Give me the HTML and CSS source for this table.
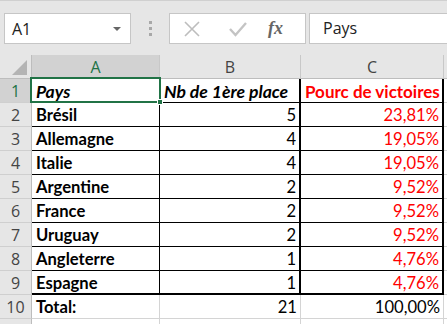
FILE: index.html
```html
<!DOCTYPE html>
<html lang="fr">
<head>
<meta charset="utf-8">
<link rel="stylesheet" href="styles.css">
</head>
<body>
<div class="app">
  <div class="toolbar">
    <div class="namebox">
      <span class="nb-text">A1</span>
      <span class="nb-arrow"></span>
    </div>
    <div class="grip"><i></i><i></i><i></i></div>
    <div class="fxbox">
      <svg class="ico" width="20" height="20" viewBox="0 0 20 20"><path d="M3 3 L17 17 M17 3 L3 17" stroke="#bdbdbd" stroke-width="1.6" fill="none"/></svg>
      <svg class="ico" width="20" height="20" viewBox="0 0 20 20"><path d="M2 10 L7.5 16 L18 4" stroke="#c4c4c4" stroke-width="2.4" fill="none"/></svg>
      <span class="fx">fx</span>
    </div>
    <div class="formula">Pays</div>
  </div>
  <div class="sheet">
    <div class="grid">
      <div class="corner"><span class="tri"></span></div>
      <div class="ch sel">A</div>
      <div class="ch">B</div>
      <div class="ch">C</div>
      <div class="ch last"></div>

      <div class="rh sel">1</div>
      <div class="c a t bi">Pays</div>
      <div class="c b t bi">Nb de 1ère place</div>
      <div class="c cc t b-red">Pourc de victoires</div>
      <div class="c d"></div>

      <div class="rh">2</div>
      <div class="c a t bold">Brésil</div>
      <div class="c b t num">5</div>
      <div class="c cc t num red">23,81%</div>
      <div class="c d"></div>

      <div class="rh">3</div>
      <div class="c a t bold">Allemagne</div>
      <div class="c b t num">4</div>
      <div class="c cc t num red">19,05%</div>
      <div class="c d"></div>

      <div class="rh">4</div>
      <div class="c a t bold">Italie</div>
      <div class="c b t num">4</div>
      <div class="c cc t num red">19,05%</div>
      <div class="c d"></div>

      <div class="rh">5</div>
      <div class="c a t bold">Argentine</div>
      <div class="c b t num">2</div>
      <div class="c cc t num red">9,52%</div>
      <div class="c d"></div>

      <div class="rh">6</div>
      <div class="c a t bold">France</div>
      <div class="c b t num">2</div>
      <div class="c cc t num red">9,52%</div>
      <div class="c d"></div>

      <div class="rh">7</div>
      <div class="c a t bold">Uruguay</div>
      <div class="c b t num">2</div>
      <div class="c cc t num red">9,52%</div>
      <div class="c d"></div>

      <div class="rh">8</div>
      <div class="c a t bold">Angleterre</div>
      <div class="c b t num">1</div>
      <div class="c cc t num red">4,76%</div>
      <div class="c d"></div>

      <div class="rh">9</div>
      <div class="c a t bold thickb">Espagne</div>
      <div class="c b t num thickb">1</div>
      <div class="c cc t num red thickb">4,76%</div>
      <div class="c d"></div>

      <div class="rh">10</div>
      <div class="c bold">Total:</div>
      <div class="c num">21</div>
      <div class="c num">100,00%</div>
      <div class="c d"></div>

      <div class="rh"></div>
      <div class="c"></div>
      <div class="c"></div>
      <div class="c"></div>
      <div class="c d"></div>
    </div>
    <div class="selection"><span class="handle"></span></div>
  </div>
</div>
</body>
</html>
```
FILE: styles.css
```css
* { box-sizing: border-box; }
html, body { margin: 0; padding: 0; }
body {
  width: 447px;
  height: 324px;
  overflow: hidden;
  background: #fff;
  font-family: "Lato", "Open Sans", sans-serif;
}
.app { width: 447px; height: 324px; overflow: hidden; }

.toolbar {
  height: 55px;
  background: #e6e6e6;
  border-top: 1px solid #d0d0d0;
  display: flex;
  align-items: flex-start;
  padding-top: 12px;
  padding-left: 4px;
}
.namebox {
  width: 127px;
  height: 31px;
  background: #fff;
  border: 1px solid #c6c6c6;
  display: flex;
  align-items: center;
  justify-content: space-between;
  padding: 0 9px 0 7px;
}
.nb-text {
  font-family: "Open Sans", sans-serif;
  font-size: 16px;
  color: #222;
}
.nb-arrow {
  width: 0; height: 0;
  border-left: 4px solid transparent;
  border-right: 4px solid transparent;
  border-top: 4px solid #666;
}
.grip {
  width: 38px;
  height: 31px;
  display: flex;
  flex-direction: column;
  align-items: center;
  justify-content: center;
  gap: 3px;
}
.grip i {
  display: block;
  width: 3px; height: 3px;
  background: #a8a8a8;
}
.fxbox {
  width: 137px;
  height: 31px;
  background: #fff;
  border: 1px solid #c6c6c6;
  display: flex;
  align-items: center;
  padding-left: 12px;
  gap: 26px;
}
.ico { display: block; flex: none; }
.fx {
  font-family: "Liberation Serif", "DejaVu Serif", serif;
  font-style: italic;
  font-weight: 700;
  font-size: 18px;
  color: #666;
  margin-left: -6px;
}
.formula {
  margin-left: 3px;
  flex: 1;
  height: 31px;
  background: #fff;
  border: 1px solid #c6c6c6;
  border-right: none;
  font-family: "Open Sans", sans-serif;
  font-size: 16px;
  color: #222;
  line-height: 29px;
  padding-left: 13px;
}

.sheet { position: relative; }
.grid {
  display: grid;
  grid-template-columns: 32px 128px 141px 143px 1fr;
  grid-template-rows: 24px repeat(10, 24px) 24px;
}
.corner, .ch, .rh {
  background: #e6e6e6;
  border-right: 1px solid #bdbdbd;
  border-bottom: 1px solid #bdbdbd;
  font-family: "Open Sans", sans-serif;
  font-size: 16px;
  color: #444;
  display: flex;
  align-items: center;
  justify-content: center;
}
.ch { border-right-color: #c8c8c8; padding-top: 1px; }
.ch.last { border-right: none; }
.ch.sel { background: #d2d2d2; color: #217346; }
.rh.sel { background: #d2d2d2; color: #217346; }
.rh { border-right-color: #bdbdbd; border-bottom-color: #cfcfcf; }
.corner { position: relative; }
.tri {
  position: absolute;
  right: 4px;
  bottom: 3px;
  width: 0; height: 0;
  border-left: 15px solid transparent;
  border-bottom: 15px solid #b4b4b4;
}

.c {
  border-right: 1px solid #d4d4d4;
  border-bottom: 1px solid #d4d4d4;
  font-size: 16.6px;
  color: #000;
  display: flex;
  align-items: center;
  padding: 1px 4px 0 4px;
  white-space: nowrap;
  overflow: hidden;
}
.c.t { border-bottom-color: #000; }
.c.a.t { border-right-color: #000; }
.c.b.t { border-right: 2px solid #000; }
.c.cc.t { border-right: 2px solid #000; }
.c.thickb { border-bottom: 2px solid #000; }
.c.d { border-right: none; }
.bold { font-weight: 700; }
.bi { font-weight: 700; font-style: italic; font-size: 17.6px; }
.b-red { font-weight: 700; color: #ff0000; font-size: 17px; }
.num { justify-content: flex-end; padding-right: 3px; }
.red { color: #ff0000; }

.selection {
  position: absolute;
  left: 30px;
  top: 22px;
  width: 131px;
  height: 26px;
  border: 2px solid #217346;
}
.handle {
  position: absolute;
  right: -4px;
  bottom: -4px;
  width: 6px;
  height: 6px;
  background: #217346;
  border: 1px solid #fff;
}
```
